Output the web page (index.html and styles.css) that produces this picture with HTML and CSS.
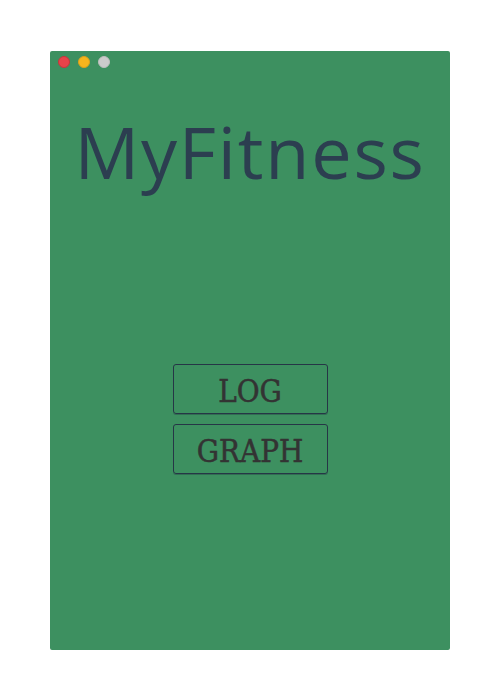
FILE: index.html
```html
<!DOCTYPE html>
<html>
<head>
<meta charset="utf-8">
<link rel="stylesheet" href="styles.css">
</head>
<body>
<div class="window">
  <div class="lights">
    <span class="dot red"></span>
    <span class="dot yellow"></span>
    <span class="dot gray"></span>
  </div>
  <h1 class="title">MyFitness</h1>
  <div class="buttons">
    <button class="btn">LOG</button>
    <button class="btn">GRAPH</button>
  </div>
</div>
</body>
</html>
```
FILE: styles.css
```css
html, body {
  margin: 0;
  padding: 0;
  background: #ffffff;
}
body {
  padding: 51px 50px 0 50px;
}
.window {
  width: 400px;
  height: 599px;
  background: #3d9060;
  border-radius: 2px;
  display: flex;
  flex-direction: column;
  align-items: center;
}
.lights {
  align-self: flex-start;
  display: flex;
  gap: 8px;
  padding: 5px 0 0 8px;
}
.dot {
  width: 12px;
  height: 12px;
  border-radius: 50%;
  box-sizing: border-box;
}
.red { background: #e8434a; border: 1px solid #c8353a; }
.yellow { background: #f6b51e; border: 1px solid #dea11a; }
.gray { background: #cbcbcb; border: 1px solid #bdbdbd; }
.title {
  margin: 47px 0 0 0;
  font-family: "Open Sans", sans-serif;
  font-weight: 400;
  font-size: 72px;
  line-height: 1;
  color: #2c3e50;
  letter-spacing: 1.8px;
}
.buttons {
  margin-top: 177px;
  display: flex;
  flex-direction: column;
  gap: 10px;
}
.btn {
  width: 155px;
  height: 50px;
  background: transparent;
  border: 1px solid #263646;
  border-radius: 3px;
  box-shadow: 0 1px 0 rgba(30, 45, 60, 0.35);
  font-family: "DejaVu Serif Condensed", "DejaVu Serif", serif;
  font-stretch: semi-condensed;
  font-size: 31px;
  color: #333333;
  -webkit-text-stroke: 0.5px #333333;
  padding: 4px 0 0 0;
  line-height: 1;
  cursor: pointer;
}
```
